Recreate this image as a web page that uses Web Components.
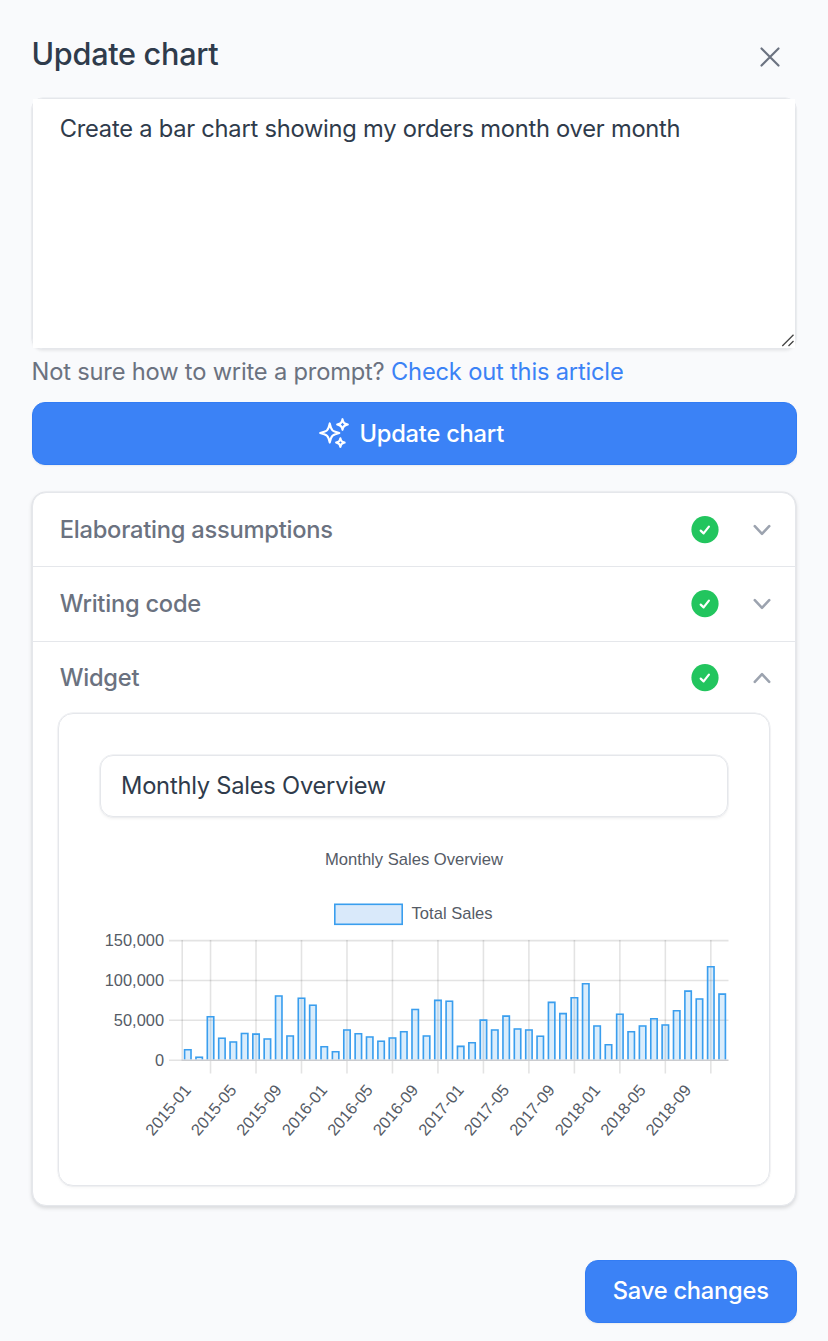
<!DOCTYPE html>
<html lang="en">
<head>
<meta charset="utf-8">
<title>Update chart</title>
<style>
html,body{margin:0;background:#f9fafc}
body{font-family:Inter,"Liberation Sans",sans-serif;font-size:23.7px;letter-spacing:-.24px;color:#2f3b4b}
</style>
</head>
<body>
<chart-editor></chart-editor>
<script>
const define = (name, html, setup) => customElements.define(name, class extends HTMLElement {
  constructor() {
    super();
    this.attachShadow({mode: 'open'}).innerHTML = html;
  }
  connectedCallback() { if (setup) setup.call(this, this.shadowRoot); }
});

define('ui-button', `
<style>
:host{display:flex;box-sizing:border-box;height:63px;align-items:center;justify-content:center;gap:9px;border-radius:13px;background:#3b82f6;border:1px solid #327cf4;color:#fff;font-weight:500;line-height:34px;box-shadow:0 1px 2px rgba(0,0,0,.06);white-space:nowrap}
</style><slot name="icon"></slot><span><slot></slot></span>`);

define('prompt-box', `
<style>
:host{display:block;box-sizing:border-box;height:251px;border:1px solid #e5e7eb;border-radius:11px;box-shadow:0 0 0 .6px #e5e7eb,0 2px 3px rgba(0,0,0,.07)}
.area{position:relative;height:249px;box-sizing:border-box;padding:13px 26.7px;background:#fff;line-height:34px}
svg{position:absolute;right:0;bottom:1px}
</style>
<div class="area"><slot></slot><svg width="14" height="14" fill="none" stroke="#444" stroke-width="1.3"><path d="M1.3 13 12.5 1.8M7.5 13l5-5"/></svg></div>`);

define('status-check', `
<style>:host{display:block;width:28px;height:28px}svg{display:block}</style>
<svg width="28" height="28" fill="none"><circle cx="14" cy="13.7" r="13.6" fill="#22c55e"/><path d="M9.7 14.6 12.6 17.4 17.9 10.6" stroke="#fff" stroke-width="2.2" stroke-linecap="round" stroke-linejoin="round"/></svg>`);

define('accordion-item', `
<style>
:host{display:block;border-bottom:1.5px solid #e5e7eb}
:host(:last-child){border-bottom:0}
header{display:flex;align-items:center;height:73.4px;padding:0 16.4px 0 26.7px;color:#6b7280;font-weight:500;line-height:34px}
.label{flex:1}
.chevron{display:block;margin-left:25.6px;color:#9ca3af}
:host([open]) .chevron{transform:rotate(180deg)}
</style>
<header><span class="label"><slot name="label"></slot></span><status-check></status-check>
<svg class="chevron" width="34" height="34" viewBox="0 0 20 20" fill="currentColor"><path d="M5.23 7.21a.75.75 0 011.06.02L10 11.168l3.71-3.938a.75.75 0 111.08 1.04l-4.25 4.5a.75.75 0 01-1.08 0l-4.25-4.5a.75.75 0 01.02-1.06z"/></svg></header>
<slot></slot>`);

define('bar-chart', `
<style>:host{display:block}svg{display:block;overflow:visible}text{font-family:"Liberation Sans",Arial,sans-serif;font-size:16.4px;letter-spacing:0;fill:#555b66}</style>
<svg width="628" height="320" viewBox="100 835 628 320"></svg>`, function (root) {
  const tops = [1049.7,1057.3,1016.7,1038.3,1042,1033.5,1034.1,1039,996,1036,998.3,1005.3,
    1046.7,1051.7,1030,1033.7,1037,1041.3,1038,1031.7,1009.5,1036,1000.4,1001.3,
    1046.4,1042.7,1020.1,1030,1016.1,1029,1030,1036.3,1002.4,1013.6,997.8,983.8,
    1026,1044.8,1014.3,1031.7,1026,1018.8,1025,1010.8,991.1,999,966.7,994.1];
  const pitch = 11.37, first = 187.8;
  const center = i => first + i * pitch;
  let s = `<text x="325" y="864.6" textLength="178" lengthAdjust="spacingAndGlyphs">${this.getAttribute('heading')}</text>
  <rect x="334.8" y="904.3" width="67.4" height="20" fill="#d9e9fa" stroke="#3a9eee" stroke-width="1.6"/>
  <text x="411.6" y="919.3" textLength="81" lengthAdjust="spacingAndGlyphs">${this.getAttribute('series')}</text>`;
  s += '<g stroke="#000" stroke-opacity=".11" stroke-width="1.6">';
  for (const y of [940.6, 980.5, 1020.3]) s += `<path d="M169 ${y}H728.5"/>`;
  s += '<path d="M169 1060.2H182M182.2 940V1060"/>';
  for (let i = 2; i < 48; i += 4) s += `<path d="M${center(i)} 940V1073.5"/>`;
  s += '</g>';
  tops.forEach((t, i) => {
    const l = center(i) - 4, r = center(i) + 4;
    s += `<path d="M${l} 1059.6V${t - .8}H${r}V1059.6Z" fill="#3a9eee" fill-opacity=".19"/>
    <path d="M${l + .8} 1059.6V${t}H${r - .8}V1059.6" fill="none" stroke="#3a9eee" stroke-width="1.6"/>`;
  });
  s += '<path d="M181.5 1060.2H728.5" stroke="#cbcccf" stroke-width="1.6"/>';
  [['150,000', 946.2], ['100,000', 986.1], ['50,000', 1025.9], ['0', 1065.8]].forEach(([t, y]) => {
    s += `<text x="164" y="${y}" text-anchor="end">${t}</text>`;
  });
  for (let n = 0; n < 12; n++) {
    const label = `${2015 + Math.floor(n / 3)}-${['01', '05', '09'][n % 3]}`;
    s += `<text transform="translate(${center(n * 4) - 19.9} 1109.8) rotate(-50)" text-anchor="middle" y="5.9">${label}</text>`;
  }
  root.querySelector('svg').innerHTML = s;
});

define('widget-card', `
<style>
:host{display:block;box-sizing:border-box;height:473px;margin:-2px 25px 19px;border:1px solid #e5e7eb;border-radius:15px;padding:41px 41px 0;box-shadow:0 0 0 .4px #e5e7eb,0 2px 3px rgba(0,0,0,.035)}
.field{display:flex;align-items:center;box-sizing:border-box;height:62px;padding:0 20px;border:1px solid #e5e7eb;border-radius:13px;box-shadow:0 0 0 .5px #e5e7eb,0 2px 3px rgba(0,0,0,.05);margin-bottom:17.8px;line-height:34px}
</style>
<div class="field"><slot></slot></div>
<bar-chart heading="Monthly Sales Overview" series="Total Sales"></bar-chart>`);

define('chart-editor', `
<style>
:host{display:flex;flex-direction:column;box-sizing:border-box;width:828px;height:1341px;overflow:hidden;padding:32px 32px 0}
header{display:flex;justify-content:space-between;height:66px}
h1{margin:0 0 0 -.5px;font-size:30.6px;font-weight:500;line-height:44px;letter-spacing:-.28px}
.close{margin:8.3px 9px 0 0;color:#6b7280}
.hint{height:34px;line-height:34px;margin:6px 0 13px -.5px;color:#6b7280;white-space:nowrap;letter-spacing:-.19px}
a{color:#3b82f6;text-decoration:none}
.wide{margin:0 -.5px;padding-right:6.5px}
.wide svg{margin:-1px 0 0 -1px}
.steps{box-sizing:border-box;height:714px;margin-top:27px;background:#fff;border:1px solid #e5e7eb;border-radius:14px;box-shadow:0 0 0 .6px #e2e4e8,0 2px 4px rgba(0,0,0,.15)}
footer{display:flex;justify-content:flex-end;margin-top:53.5px}
.save{width:211.5px;margin-right:-.5px}
</style>
<header><h1>Update chart</h1>
<svg class="close" width="34" height="34" viewBox="0 0 24 24" fill="none" stroke="currentColor" stroke-width="1.5" stroke-linecap="round"><path d="M6 18 18 6M6 6l12 12"/></svg></header>
<prompt-box>Create a bar chart showing my orders month over month</prompt-box>
<div class="hint">Not sure how to write a prompt? <a>Check out this article</a></div>
<ui-button class="wide"><svg slot="icon" width="34" height="34" viewBox="0 0 24 24" fill="none" stroke="currentColor" stroke-width="1.5" stroke-linecap="round" stroke-linejoin="round"><path d="M9.813 15.904L9 18.75l-.813-2.846a4.5 4.5 0 00-3.09-3.09L2.25 12l2.846-.813a4.5 4.5 0 003.09-3.09L9 5.25l.813 2.846a4.5 4.5 0 003.09 3.09L15.75 12l-2.846.813a4.5 4.5 0 00-3.09 3.09zM18.259 8.715L18 9.75l-.259-1.035a3.375 3.375 0 00-2.455-2.456L14.25 6l1.036-.259a3.375 3.375 0 002.455-2.456L18 2.25l.259 1.035a3.375 3.375 0 002.456 2.456L21.75 6l-1.035.259a3.375 3.375 0 00-2.456 2.456zM16.894 20.567L16.5 21.75l-.394-1.183a2.25 2.25 0 00-1.423-1.423L13.5 18.75l1.183-.394a2.25 2.25 0 001.423-1.423l.394-1.183.394 1.183a2.25 2.25 0 001.423 1.423l1.183.394-1.183.394a2.25 2.25 0 00-1.423 1.423z"/></svg>Update chart</ui-button>
<section class="steps">
<accordion-item><span slot="label">Elaborating assumptions</span></accordion-item>
<accordion-item><span slot="label">Writing code</span></accordion-item>
<accordion-item open><span slot="label">Widget</span><widget-card>Monthly Sales Overview</widget-card></accordion-item>
</section>
<footer><ui-button class="save">Save changes</ui-button></footer>`);
</script>
</body>
</html>
